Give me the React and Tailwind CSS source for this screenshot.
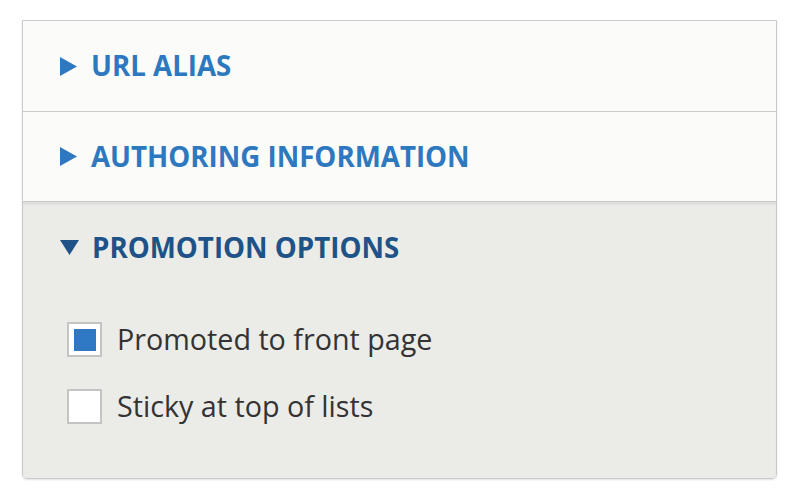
import { useState } from "react";

function Arrow({ open, dark }) {
  if (open) {
    return (
      <svg width="20" height="17" viewBox="0 0 20 17" className="shrink-0">
        <polygon points="0,1 19,1 9.5,16" fill={dark ? "#1f5286" : "#2e78c0"} />
      </svg>
    );
  }
  return (
    <svg width="18" height="19" viewBox="0 0 18 19" className="shrink-0">
      <polygon points="0,0 17,9.5 0,19" fill="#2e78c0" />
    </svg>
  );
}

function Checkbox({ checked, label, onToggle }) {
  return (
    <label className="flex cursor-pointer items-center gap-[15px]" onClick={onToggle}>
      <span className="flex h-[35px] w-[35px] items-center justify-center border-2 border-[#c4c4c2] bg-white">
        {checked && <span className="h-[22px] w-[22px] bg-[#2f78c4]" />}
      </span>
      <span className="text-[28.7px] leading-none text-[#333333]">{label}</span>
    </label>
  );
}

export default function App() {
  const [promoted, setPromoted] = useState(true);
  const [sticky, setSticky] = useState(false);

  return (
    <div
      className="min-h-screen bg-white pl-[22px] pr-[23px] pt-[20px]"
      style={{ fontFamily: '"Open Sans", "DejaVu Sans", sans-serif' }}
    >
      <div className="overflow-hidden rounded-b-[5px] border border-[#cacaca] shadow-[0_1px_2px_rgba(0,0,0,0.12)]">
        <div className="flex h-[91px] items-center gap-[13px] border-b border-[#cacaca] bg-[#fbfbfa] pl-[37px]">
          <Arrow />
          <span className="text-[27.7px] font-bold uppercase leading-none text-[#2e78c0]">URL alias</span>
        </div>
        <div className="flex h-[90px] items-center gap-[13px] border-b border-[#cacaca] bg-[#fbfbfa] pl-[37px]">
          <Arrow />
          <span className="text-[27.7px] font-bold uppercase leading-none text-[#2e78c0]">Authoring information</span>
        </div>
        <div className="h-[276px] bg-[#ebebe7] shadow-[inset_0_3px_3px_-1px_rgba(0,0,0,0.08)]">
          <div className="flex h-[95px] items-center gap-[12px] pb-[4px] pl-[37px]">
            <Arrow open dark />
            <span className="text-[27.7px] font-bold uppercase leading-none text-[#1f5286]">Promotion options</span>
          </div>
          <div className="flex flex-col gap-[32px] pl-[44px] pt-[25px]">
            <Checkbox
              checked={promoted}
              label="Promoted to front page"
              onToggle={() => setPromoted(!promoted)}
            />
            <Checkbox
              checked={sticky}
              label="Sticky at top of lists"
              onToggle={() => setSticky(!sticky)}
            />
          </div>
        </div>
      </div>
    </div>
  );
}
